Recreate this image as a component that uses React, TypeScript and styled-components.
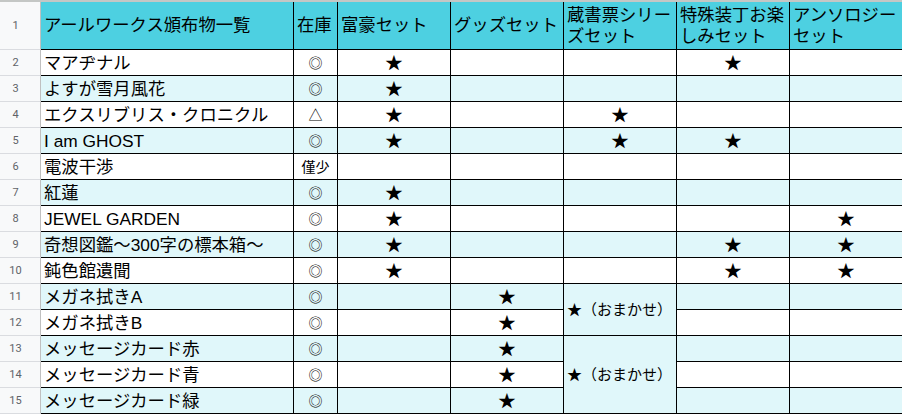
import React from "react";
import styled, { createGlobalStyle } from "styled-components";

const GlobalStyle = createGlobalStyle`
  html, body {
    margin: 0;
    padding: 0;
    background: #ffffff;
  }
  body {
    font-family: "Liberation Sans", "Noto Sans CJK JP", sans-serif;
    color: #000;
    overflow: hidden;
  }
`;

const SETS = [
  "富豪セット",
  "グッズセット",
  "蔵書票シリーズセット",
  "特殊装丁お楽しみセット",
  "アンソロジーセット",
];

// null = covered by a merged cell above
type SetCell = string | { text: string; span: number } | null;

interface Item {
  name: string;
  stock: string;
  sets: SetCell[];
}

const OMAKASE = "★（おまかせ）";

const ITEMS: Item[] = [
  { name: "マアヂナル", stock: "◎", sets: ["★", "", "", "★", ""] },
  { name: "よすが雪月風花", stock: "◎", sets: ["★", "", "", "", ""] },
  { name: "エクスリブリス・クロニクル", stock: "△", sets: ["★", "", "★", "", ""] },
  { name: "I am GHOST", stock: "◎", sets: ["★", "", "★", "★", ""] },
  { name: "電波干渉", stock: "僅少", sets: ["", "", "", "", ""] },
  { name: "紅蓮", stock: "◎", sets: ["★", "", "", "", ""] },
  { name: "JEWEL GARDEN", stock: "◎", sets: ["★", "", "", "", "★"] },
  { name: "奇想図鑑～300字の標本箱～", stock: "◎", sets: ["★", "", "", "★", "★"] },
  { name: "鈍色館遺聞", stock: "◎", sets: ["★", "", "", "★", "★"] },
  { name: "メガネ拭きA", stock: "◎", sets: ["", "★", { text: OMAKASE, span: 2 }, "", ""] },
  { name: "メガネ拭きB", stock: "◎", sets: ["", "★", null, "", ""] },
  { name: "メッセージカード赤", stock: "◎", sets: ["", "★", { text: OMAKASE, span: 3 }, "", ""] },
  { name: "メッセージカード青", stock: "◎", sets: ["", "★", null, "", ""] },
  { name: "メッセージカード緑", stock: "◎", sets: ["", "★", null, "", ""] },
];

function App() {
  return (
    <>
      <GlobalStyle />
      <TopEdge />
      <Sheet>
        <RowNum>1</RowNum>
        <HeaderCell>アールワークス頒布物一覧</HeaderCell>
        <HeaderCell>在庫</HeaderCell>
        {SETS.map((s) => (
          <HeaderCell key={s}>{s}</HeaderCell>
        ))}

        {ITEMS.map((item, i) => {
          const alt = i % 2 === 1;
          return (
            <React.Fragment key={item.name}>
              <RowNum>{i + 2}</RowNum>
              <Cell $alt={alt}>{item.name}</Cell>
              <Cell $alt={alt} $center $size={14}>
                {item.stock}
              </Cell>
              {item.sets.map((c, j) => {
                if (c === null) return null;
                if (typeof c === "string") {
                  return (
                    <Cell key={j} $alt={alt} $center>
                      {c}
                    </Cell>
                  );
                }
                return (
                  <Cell key={j} $alt={alt} $span={c.span} $size={15}>
                    {c.text}
                  </Cell>
                );
              })}
            </React.Fragment>
          );
        })}
      </Sheet>
    </>
  );
}

export default App;

const TopEdge = styled.div`
  height: 2px;
  background: #c4c7c5;
`;

const Sheet = styled.div`
  display: grid;
  grid-template-columns: 41px 253px 44px repeat(5, 113px);
  grid-template-rows: 48px;
  grid-auto-rows: 26px;
`;

const RowNum = styled.div`
  box-sizing: border-box;
  display: flex;
  align-items: center;
  justify-content: center;
  padding-right: 9px;
  background: #f8f9fa;
  border-right: 1px solid #c0c0c0;
  border-bottom: 1px solid #dadce0;
  font-family: Roboto, "Liberation Sans", sans-serif;
  font-size: 11px;
  color: #5f6368;
`;

const HeaderCell = styled.div`
  box-sizing: border-box;
  display: flex;
  align-items: center;
  padding: 0 3px;
  background: #4dd0e1;
  border-right: 1px solid #000;
  border-bottom: 1px solid #000;
  font-size: 17.33px;
  line-height: 21px;
  color: #000;
  overflow: hidden;
`;

const Cell = styled.div<{ $alt?: boolean; $center?: boolean; $span?: number; $size?: number }>`
  box-sizing: border-box;
  display: flex;
  align-items: center;
  justify-content: ${(p) => (p.$center ? "center" : "flex-start")};
  grid-row: ${(p) => (p.$span ? `span ${p.$span}` : "auto")};
  padding: 0 3px;
  background: ${(p) => (p.$alt ? "#e0f7fa" : "#ffffff")};
  border-right: 1px solid #000;
  border-bottom: 1px solid #000;
  font-size: ${(p) => p.$size ?? 17.33}px;
  line-height: 20px;
  white-space: nowrap;
  overflow: hidden;
`;
